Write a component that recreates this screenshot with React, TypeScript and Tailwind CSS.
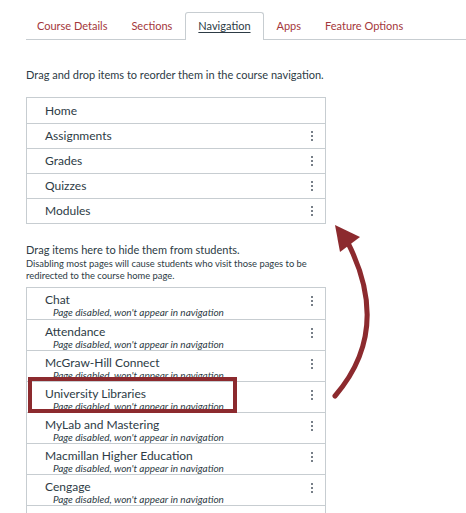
import React from 'react';

const tabs = ['Course Details', 'Sections', 'Navigation', 'Apps', 'Feature Options'];
const enabled = ['Home', 'Assignments', 'Grades', 'Quizzes', 'Modules'];
const disabled = [
  'Chat',
  'Attendance',
  'McGraw-Hill Connect',
  'University Libraries',
  'MyLab and Mastering',
  'Macmillan Higher Education',
  'Cengage',
  'Intellipath Integrations',
];

const Kebab = () => (
  <div className="flex flex-col gap-[2px] items-center w-[3px]">
    <span className="block w-[2px] h-[2px] rounded-full bg-[#4a5560]" />
    <span className="block w-[2px] h-[2px] rounded-full bg-[#4a5560]" />
    <span className="block w-[2px] h-[2px] rounded-full bg-[#4a5560]" />
  </div>
);

export default function App() {
  return (
    <div
      className="relative w-[466px] h-[513px] overflow-hidden bg-white text-[#2d3b45]"
      style={{ fontFamily: 'Lato, "Noto Sans", sans-serif' }}
    >
      {/* tabs */}
      <div className="pt-[12px] pl-[26px]">
        <div className="flex gap-[2px] border-b border-[#c7cdd1] h-[28px] whitespace-nowrap">
          {tabs.map((t) =>
            t === 'Navigation' ? (
              <div
                key={t}
                className="shrink-0 px-[12px] h-[28px] -mb-px flex items-center bg-white border border-b-0 border-[#c7cdd1] rounded-t-[3px] text-[11px] underline underline-offset-2 text-[#2d3b45]"
              >
                {t}
              </div>
            ) : (
              <div key={t} className="shrink-0 px-[11px] h-[28px] flex items-center text-[11px] text-[#a4373b]">
                {t}
              </div>
            )
          )}
        </div>
      </div>

      <div className="pl-[26px]">
        <p className="mt-[28px] text-[11px] leading-[14px]">
          Drag and drop items to reorder them in the course navigation.
        </p>

        <div className="mt-[15px] w-[300px] border border-[#c7cdd1]">
          {enabled.map((item, i) => (
            <div
              key={item}
              className={`h-[25px] flex items-center justify-between pl-[18px] pr-[12px] text-[12px] ${
                i > 0 ? 'border-t border-[#c7cdd1]' : ''
              }`}
            >
              <span>{item}</span>
              {i > 0 && <Kebab />}
            </div>
          ))}
        </div>

        <p className="mt-[19px] text-[11px] leading-[14px]">Drag items here to hide them from students.</p>
        <p className="mt-[1px] text-[9.4px] leading-[12px] w-[290px]">
          Disabling most pages will cause students who visit those pages to be redirected to the course home page.
        </p>

        <div className="relative mt-[5px] w-[300px] border border-[#c7cdd1] border-b-0">
          {disabled.map((item, i) => (
            <div
              key={item}
              className={`h-[31px] flex items-start justify-between pl-[18px] pr-[12px] ${
                i > 0 ? 'border-t border-[#c7cdd1]' : ''
              }`}
            >
              <div className="pt-[4px]">
                <div className="text-[12px] leading-[15px]">{item}</div>
                <div className="pl-[8px] text-[10px] leading-[11px] italic">Page disabled, won't appear in navigation</div>
              </div>
              <div className="pt-[8px]">
                <Kebab />
              </div>
            </div>
          ))}
          {/* highlight box */}
          <div className="absolute left-[1px] top-[89px] w-[209px] h-[36px] border-[4px] border-[#8c2a2e] pointer-events-none" />
        </div>
      </div>

      {/* arrow */}
      <svg className="absolute left-0 top-0 pointer-events-none" width="466" height="513" viewBox="0 0 466 513">
        <path d="M335 396 Q 392 330 348 243" fill="none" stroke="#8c2a2e" strokeWidth="5" strokeLinecap="round" />
        <polygon points="335,225 360,237 340,252" fill="#8c2a2e" />
      </svg>
    </div>
  );
}
